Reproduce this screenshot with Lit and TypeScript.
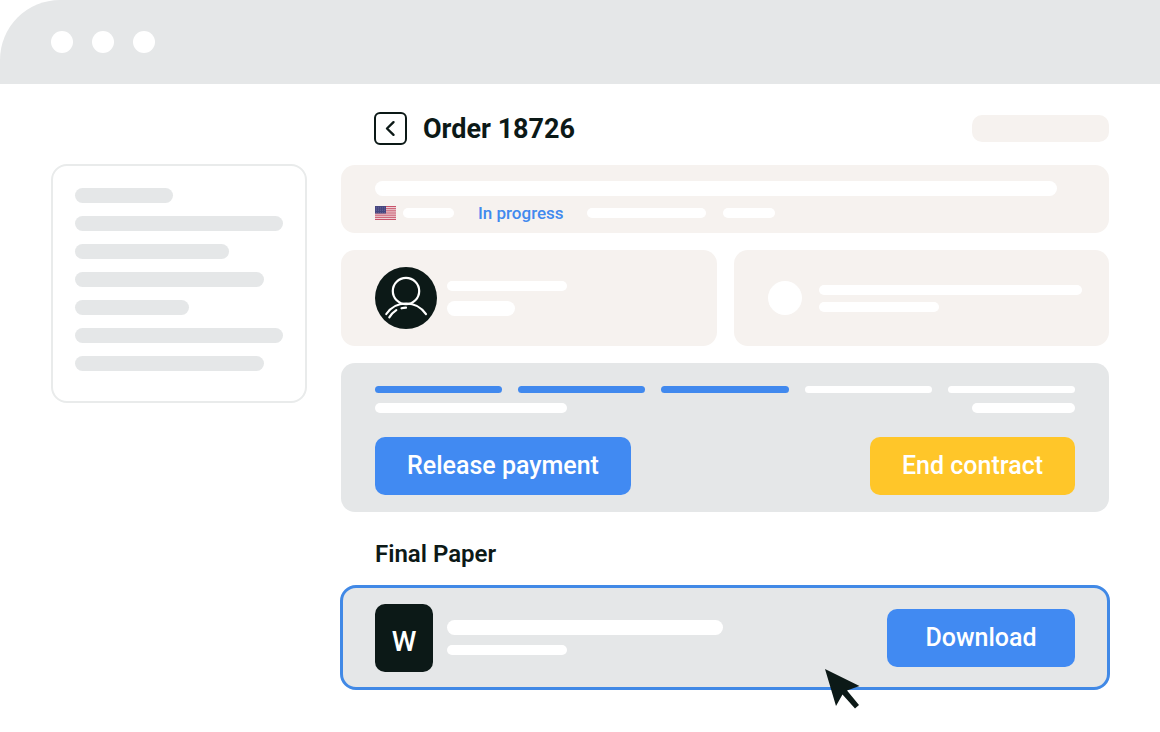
import { LitElement, css, html, svg } from "lit";
import { customElement, property } from "lit/decorators.js";
import { classMap } from "lit/directives/class-map.js";
import { styleMap } from "lit/directives/style-map.js";

/** Rounded placeholder line that stands in for a piece of text. */
@customElement("text-bar")
class TextBar extends LitElement {
  @property() width = "100%";
  @property() size: "thin" | "thick" = "thin";
  @property() tone: "light" | "grey" = "light";

  static styles = css`
    :host {
      display: block;
      min-width: 0;
    }
    .bar {
      max-width: 100%;
      height: 10px;
      border-radius: 5px;
      background: #fff;
    }
    .thick {
      height: 15px;
      border-radius: 8px;
    }
    .grey {
      background: #e5e7e8;
    }
  `;

  render() {
    return html`<div
      class=${classMap({ bar: true, thick: this.size === "thick", grey: this.tone === "grey" })}
      style=${styleMap({ width: this.width })}
    ></div>`;
  }
}

const flagIcon = html`<svg class="flag" viewBox="0 0 21 14" role="img" aria-label="United States">
  <rect width="21" height="14" fill="#f0dcdf" />
  ${[0, 2, 4, 6, 8, 10, 12].map(
    (i) => svg`<rect y=${(i * 14) / 13} width="21" height=${14 / 13} fill="#c8536a" />`
  )}
  <rect width="11" height="7.5" fill="#46467f" />
  ${[0, 1, 2, 3].map((row) =>
    [0, 1, 2, 3, 4].map(
      (col) => svg`<circle cx=${1.4 + col * 2} cy=${1.2 + row * 1.7} r="0.35" fill="#8f8fbf" />`
    )
  )}
</svg>`;

const avatarIcon = html`<svg class="avatar" viewBox="0 0 62 62" aria-hidden="true">
  <circle cx="31" cy="31" r="31" fill="#0c1917" />
  <g fill="none" stroke="#fff" stroke-width="2.2" stroke-linecap="round">
    <circle cx="31" cy="24" r="13.200" />
    <path d="M11.300 47C20.500 33.500 41 32.500 51 47.200" />
    <path d="M14.300 50.300Q17 46 21.300 43.200" />
    <path d="M26.500 41.300Q28.500 40.700 31 40.700" />
  </g>
</svg>`;

@customElement("app-root")
class AppRoot extends LitElement {
  private readonly menu = ["47%", "100%", "74%", "91%", "55%", "100%", "91%"];
  private readonly steps = [true, true, true, false, false];

  static styles = css`
    :host {
      display: block;
      min-height: 100vh;
      background: #fff;
      color: #0c1917;
      font-family: Roboto, "Liberation Sans", sans-serif;
    }
    * {
      box-sizing: border-box;
    }
    .titlebar {
      display: flex;
      align-items: center;
      gap: 19px;
      height: 84px;
      padding: 0 51px;
      border-top-left-radius: 60px;
      background: #e5e7e8;
    }
    .dot {
      width: 22px;
      height: 22px;
      border-radius: 50%;
      background: #fff;
    }
    .layout {
      display: grid;
      grid-template-columns: 1fr 3fr;
      gap: 34px;
      align-items: start;
      padding: 28px 51px 40px;
    }
    .menu {
      display: grid;
      gap: 13px;
      margin: 52px 0 0;
      padding: 22px 22px 30px;
      border: 2px solid #e9ebeb;
      border-radius: 16px;
      list-style: none;
    }
    .order {
      display: flex;
      flex-direction: column;
      gap: 17px;
    }
    .head {
      display: flex;
      align-items: center;
      gap: 16px;
      margin-bottom: 3px;
      padding-left: 33px;
    }
    .back {
      display: grid;
      place-items: center;
      width: 33px;
      height: 33px;
      padding: 0;
      border: 2px solid #0c1917;
      border-radius: 6px;
      background: none;
    }
    .chevron {
      width: 12px;
      height: 17px;
    }
    h1 {
      flex: 1;
      margin: 0;
      font-size: 27px;
      line-height: 32px;
      font-weight: 700;
    }
    .pill {
      width: 137px;
      height: 27px;
      border-radius: 10px;
      background: #f6f2ef;
    }
    .card {
      border-radius: 14px;
      background: #f6f2ef;
    }
    .summary {
      display: grid;
      gap: 7px;
      padding: 16px 52px 10px 34px;
    }
    .facts {
      display: grid;
      grid-template-columns: 86px 92px 119px 52px;
      column-gap: 17px;
      align-items: center;
    }
    .origin {
      display: flex;
      align-items: center;
      gap: 7px;
    }
    .flag {
      display: block;
      width: 21px;
      height: 14px;
    }
    .status {
      color: #4189ee;
      font-size: 17px;
      line-height: 20px;
      font-weight: 500;
    }
    .people {
      display: grid;
      grid-template-columns: 1fr 1fr;
      gap: 17px;
    }
    .person {
      display: flex;
      align-items: center;
      min-height: 96px;
      padding: 0 27px 0 34px;
    }
    .avatar {
      flex: none;
      width: 62px;
      height: 62px;
      margin-right: 10px;
    }
    .blank {
      flex: none;
      width: 34px;
      height: 34px;
      margin-right: 17px;
      border-radius: 50%;
      background: #fff;
    }
    .lines {
      display: grid;
      flex: 1;
      gap: 10px;
    }
    .tight {
      gap: 7px;
    }
    .panel {
      padding: 23px 34px 17px;
      border-radius: 14px;
      background: #e5e7e8;
    }
    .steps {
      display: grid;
      grid-template-columns: repeat(5, 1fr);
      gap: 16px;
      margin: 0 0 10px;
      padding: 0;
      list-style: none;
    }
    .step {
      height: 7px;
      border-radius: 4px;
      background: #fff;
    }
    .done {
      background: #4189ee;
    }
    .row {
      display: flex;
      align-items: center;
      justify-content: space-between;
    }
    .actions {
      margin-top: 24px;
    }
    .button {
      width: 256px;
      height: 58px;
      padding: 0;
      border: 0;
      border-radius: 10px;
      background: #418af2;
      color: #fff;
      font-family: inherit;
      font-size: 25px;
      line-height: 28px;
      font-weight: 500;
    }
    .end {
      width: 205px;
      background: #ffc629;
    }
    .download {
      width: 188px;
    }
    h2 {
      margin: 11px 0 0;
      padding-left: 34px;
      font-size: 24px;
      line-height: 28px;
      font-weight: 600;
    }
    .file {
      position: relative;
      display: flex;
      align-items: center;
      gap: 14px;
      min-height: 105px;
      margin: 0 -1px;
      padding: 0 32px;
      border: 3px solid #4189e6;
      border-radius: 16px;
      background: #e5e7e8;
    }
    .badge {
      display: grid;
      place-items: center;
      width: 58px;
      height: 68px;
      padding-top: 8px;
      border-radius: 10px;
      background: #0c1917;
      color: #fff;
      font-size: 28px;
      line-height: 32px;
      font-weight: 500;
    }
    .cursor {
      position: absolute;
      right: 246px;
      bottom: -23px;
      width: 36px;
      height: 41px;
    }
  `;

  render() {
    return html`
      <header class="titlebar">
        <span class="dot"></span><span class="dot"></span><span class="dot"></span>
      </header>
      <div class="layout">
        <ul class="menu">
          ${this.menu.map(
            (width) => html`<li><text-bar width=${width} size="thick" tone="grey"></text-bar></li>`
          )}
        </ul>
        <main class="order">
          <div class="head">
            <button class="back" type="button" aria-label="Back">
              <svg class="chevron" viewBox="0 0 12 17" fill="none" stroke="#0c1917" stroke-width="2.4" stroke-linecap="round" stroke-linejoin="round" aria-hidden="true">
                <path d="M8.500 2.200 2 8.500 8.500 14.800" />
              </svg>
            </button>
            <h1>Order 18726</h1>
            <span class="pill"></span>
          </div>

          <section class="card summary">
            <text-bar size="thick"></text-bar>
            <div class="facts">
              <div class="origin">${flagIcon}<text-bar width="51px"></text-bar></div>
              <span class="status">In progress</span>
              <text-bar></text-bar>
              <text-bar></text-bar>
            </div>
          </section>

          <div class="people">
            <section class="card person">
              ${avatarIcon}
              <div class="lines">
                <text-bar width="120px"></text-bar>
                <text-bar width="68px" size="thick"></text-bar>
              </div>
            </section>
            <section class="card person">
              <span class="blank"></span>
              <div class="lines tight">
                <text-bar></text-bar>
                <text-bar width="120px"></text-bar>
              </div>
            </section>
          </div>

          <section class="panel">
            <ol class="steps">
              ${this.steps.map((done) => html`<li class=${classMap({ step: true, done })}></li>`)}
            </ol>
            <div class="row">
              <text-bar width="192px"></text-bar>
              <text-bar width="103px"></text-bar>
            </div>
            <div class="row actions">
              <button class="button" type="button">Release payment</button>
              <button class="button end" type="button">End contract</button>
            </div>
          </section>

          <h2>Final Paper</h2>
          <section class="file">
            <span class="badge">W</span>
            <div class="lines">
              <text-bar width="276px" size="thick"></text-bar>
              <text-bar width="120px"></text-bar>
            </div>
            <button class="button download" type="button">Download</button>
            <svg class="cursor" viewBox="0 0 36 41" fill="#0c1917" aria-hidden="true">
              <path d="M0 0 34.500 17 22 21.500 34 36 30 39.500 17.500 25.500 11 37Z" />
            </svg>
          </section>
        </main>
      </div>
    `;
  }
}
